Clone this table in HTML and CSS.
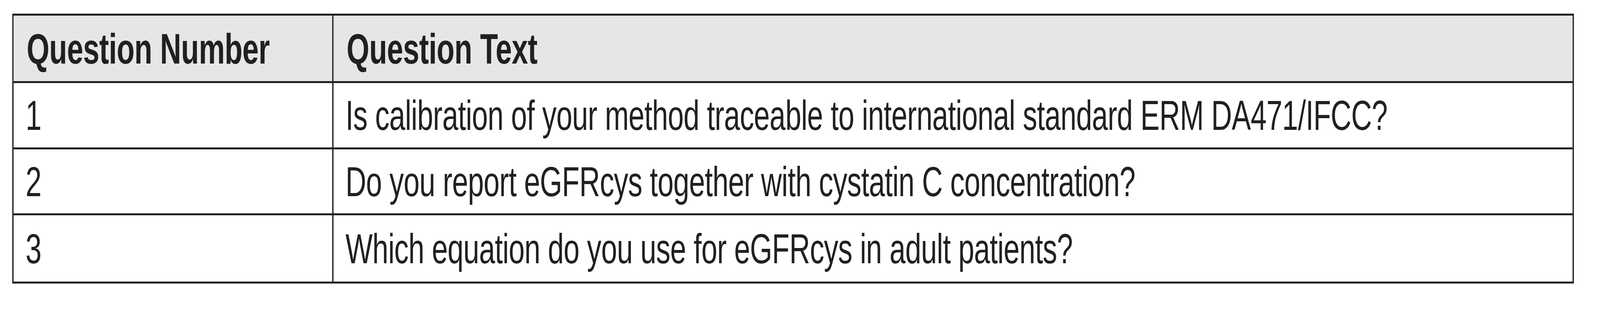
FILE: index.html
```html
<!DOCTYPE html>
<html lang="en">
<head>
<meta charset="utf-8">
<title>Questions</title>
<link rel="stylesheet" href="styles.css">
</head>
<body>
<div class="page">
  <div class="qtable">
    <div class="cell head col1">Question Number</div>
    <div class="cell head col2">Question Text</div>
    <div class="cell body col1 r1">1</div>
    <div class="cell body col2 r1">Is calibration of your method traceable to international standard ERM DA471/IFCC?</div>
    <div class="cell body col1 r2">2</div>
    <div class="cell body col2 r2">Do you report eGFRcys together with cystatin C concentration?</div>
    <div class="cell body col1 r3">3</div>
    <div class="cell body col2 r3">Which equation do you use for eGFRcys in adult patients?</div>
  </div>
</div>
</body>
</html>
```
FILE: styles.css
```css
html, body {
  margin: 0;
  padding: 0;
  background: #ffffff;
}
body {
  font-family: "Liberation Sans", Arial, Helvetica, sans-serif;
  color: #231f20;
}
/* The sheet is designed at 6006px wide and fitted to the 4096px-wide window */
.page {
  width: 6006px;
  height: 800px;
  box-sizing: border-box;
  padding: 35px 0 0 46px;
  transform: scaleX(0.681985);
  transform-origin: 0 0;
}
.qtable {
  display: grid;
  grid-template-columns: 1201px 4651px;
  grid-template-rows: 168px 170px 169px 175px;
  border: 5px solid #231f20;
  width: max-content;
}
.cell {
  display: flex;
  align-items: center;
  white-space: nowrap;
}
.col1 {
  border-right: 5px solid #231f20;
}
.r1, .r2, .r3 {
  border-top: 5px solid #231f20;
}
.head {
  background: #e6e6e6;
  font-weight: 700;
  font-size: 110px;
  letter-spacing: -0.7px;
  padding-left: 49px;
}
.body {
  font-weight: 400;
  font-size: 108px;
  letter-spacing: -1px;
  padding-left: 45px;
}
```
